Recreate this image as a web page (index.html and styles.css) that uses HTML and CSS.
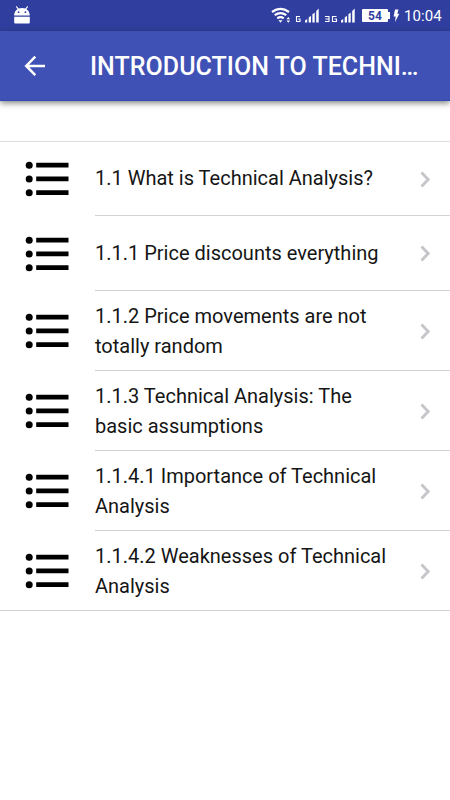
FILE: index.html
```html
<!DOCTYPE html>
<html lang="en">
<head>
<meta charset="utf-8">
<title>Introduction to Technical Analysis</title>
<link rel="stylesheet" href="styles.css">
</head>
<body>
<svg class="defs" width="0" height="0" aria-hidden="true">
  <symbol id="list" viewBox="0 0 46 38">
    <circle cx="4.2" cy="5.2" r="3.5"/><circle cx="4.2" cy="19" r="3.5"/><circle cx="4.2" cy="32.7" r="3.5"/>
    <path d="M11.200 2.800h32.300v4.600H11.200zM11.200 16.600h32.300v4.600H11.200zM11.200 30.300h32.300v4.600H11.200z"/>
  </symbol>
  <symbol id="chevron" viewBox="0 0 12 18">
    <path d="M1.500 2.600L8.200 9.500l-6.700 6.900" fill="none" stroke="#c6c6ca" stroke-width="2.900"/>
  </symbol>
</svg>
<div class="status">
  <svg class="droid" width="18" height="20" viewBox="0 0 18 20">
    <path d="M1.200 10.500C1.200 6.500 4 3 9 3s7.800 3.500 7.800 7.500zM1.200 11.800h15.600v5.600q0 1.100-1.100 1.100H2.300q-1.100 0-1.100-1.100z" fill="#fff"/>
    <path d="M3.300 1.300l2.200 3M14.700 1.300l-2.200 3" stroke="#fff" stroke-width="1.100"/>
    <circle cx="5.600" cy="7.200" r=".9" fill="#303f9f"/><circle cx="12.400" cy="7.200" r=".9" fill="#303f9f"/>
  </svg>
  <svg class="signals" width="86" height="18" viewBox="0 0 86 18">
    <g fill="none" stroke="#fff" stroke-width="2.200">
      <path d="M1 5q8.500-6.200 17 0M3.700 8.200q5.800-4.200 11.600 0M6.300 11.300q3.200-2.400 6.400 0"/>
    </g>
    <path d="M7.500 13.200h4l-2 2.600zM15.500 12.200l1.800-2.200 1.800 2.200zM15.500 13.500l1.800 2.200 1.800-2.200z" fill="#fff"/>
    <path d="M29 9.500h-3.500v5H29v-2.500h-1.800M54 9.500h4v5h-4M54.500 12H58M65.500 9.500h-4v5h4v-2.500h-2" fill="none" stroke="#fff" stroke-width="1.100"/>
    <path d="M34 15.500v-2l2.200-1.600v3.600zM37.700 15.500v-5.100L40 8.800v6.700zM41.400 15.500V7.300l2.300-1.700v9.900zM45.200 15.500V3.900L47.700 1.500v14zM70 15.500v-2l2.200-1.600v3.600zM73.700 15.500v-5.100L76 8.800v6.700zM77.400 15.500V7.300l2.300-1.700v9.900zM81.200 15.500V3.900L83.700 1.500v14z" fill="#fff"/>
  </svg>
  <span class="battery">54</span>
  <svg class="bolt" width="7" height="14" viewBox="0 0 7 14"><path d="M2 .5h3.500L4.300 4.800h2L2 13l.7-5.400H.6z" fill="#fff"/></svg>
  <span class="clock">10:04</span>
</div>
<header class="toolbar">
  <svg class="back" width="22" height="22" viewBox="0 0 22 22"><path d="M11.300 1.700L2.200 11l9.100 9.200M2.400 11H21" fill="none" stroke="#fff" stroke-width="2.500"/></svg>
  <h1>INTRODUCTION TO TECHNI…</h1>
</header>
<main>
  <ul class="list">
    <li class="first"><svg class="icon"><use href="#list"/></svg><div class="inner"><span>1.1 What is Technical Analysis?</span><svg class="chev"><use href="#chevron"/></svg></div></li>
    <li><svg class="icon"><use href="#list"/></svg><div class="inner"><span>1.1.1 Price discounts everything</span><svg class="chev"><use href="#chevron"/></svg></div></li>
    <li class="tall"><svg class="icon"><use href="#list"/></svg><div class="inner"><span>1.1.2 Price movements are not totally random</span><svg class="chev"><use href="#chevron"/></svg></div></li>
    <li class="tall"><svg class="icon"><use href="#list"/></svg><div class="inner"><span>1.1.3 Technical Analysis: The basic assumptions</span><svg class="chev"><use href="#chevron"/></svg></div></li>
    <li class="tall"><svg class="icon"><use href="#list"/></svg><div class="inner"><span>1.1.4.1 Importance of Technical Analysis</span><svg class="chev"><use href="#chevron"/></svg></div></li>
    <li class="tall"><svg class="icon"><use href="#list"/></svg><div class="inner"><span>1.1.4.2 Weaknesses of Technical Analysis</span><svg class="chev"><use href="#chevron"/></svg></div></li>
  </ul>
</main>
</body>
</html>
```

FILE: styles.css
```css
* { box-sizing: border-box; }
body {
  margin: 0;
  min-height: 800px;
  background: #fff;
  color: #151515;
  font-family: Roboto, sans-serif;
}
svg { display: block; flex: none; }
.defs { position: absolute; }
.status {
  display: flex;
  align-items: center;
  height: 31px;
  padding: 0 7px 0 13px;
  background: #303f9f;
  color: #fff;
}
.droid { margin-bottom: 1px; }
.signals { margin-left: auto; margin-top: 1px; }
.battery {
  position: relative;
  width: 26px;
  height: 13px;
  margin-left: 5px;
  border-radius: 1px;
  background: #fff;
  color: #303f9f;
  font-size: 12px;
  font-weight: 700;
  line-height: 14px;
  text-align: center;
}
.battery::after {
  content: "";
  position: absolute;
  left: 26px;
  top: 3px;
  width: 2px;
  height: 7px;
  background: #fff;
}
.bolt { margin-left: 5px; }
.clock {
  width: 39px;
  margin-left: 4px;
  padding-top: 1px;
  font-size: 15px;
  line-height: 31px;
  letter-spacing: .1px;
  white-space: nowrap;
}
.toolbar {
  display: flex;
  align-items: center;
  height: 70px;
  padding: 0 24px;
  background: #3f51b5;
  border-bottom: 1px solid #3048b2;
  box-shadow: 0 2px 6px rgba(0, 0, 0, .5);
  color: #fff;
}
h1 {
  flex: 1;
  margin: 2px 0 0 44px;
  font-size: 25px;
  font-weight: 500;
  line-height: 34px;
  letter-spacing: .03px;
  white-space: nowrap;
}
main { padding-top: 40px; }
.list {
  margin: 0;
  padding: 0;
  border-top: 1px solid #dedede;
  border-bottom: 1px solid #d3d3d3;
  list-style: none;
}
li {
  display: flex;
  align-items: center;
  height: 75px;
  padding-left: 25px;
}
.first { height: 74px; }
.tall { height: 80px; }
.tall:last-child { height: 79px; }
.icon { width: 46px; height: 38px; }
.inner {
  display: flex;
  flex: 1;
  align-items: center;
  height: 100%;
  margin-left: 24px;
  padding-right: 18px;
  border-bottom: 1px solid #d3d3d3;
}
li:last-child .inner { border-bottom: 0; }
.inner span {
  flex: 1;
  padding-right: 20px;
  font-size: 20px;
  line-height: 30px;
}
.first span { padding-bottom: 1px; }
.chev { width: 12px; height: 18px; }
```
